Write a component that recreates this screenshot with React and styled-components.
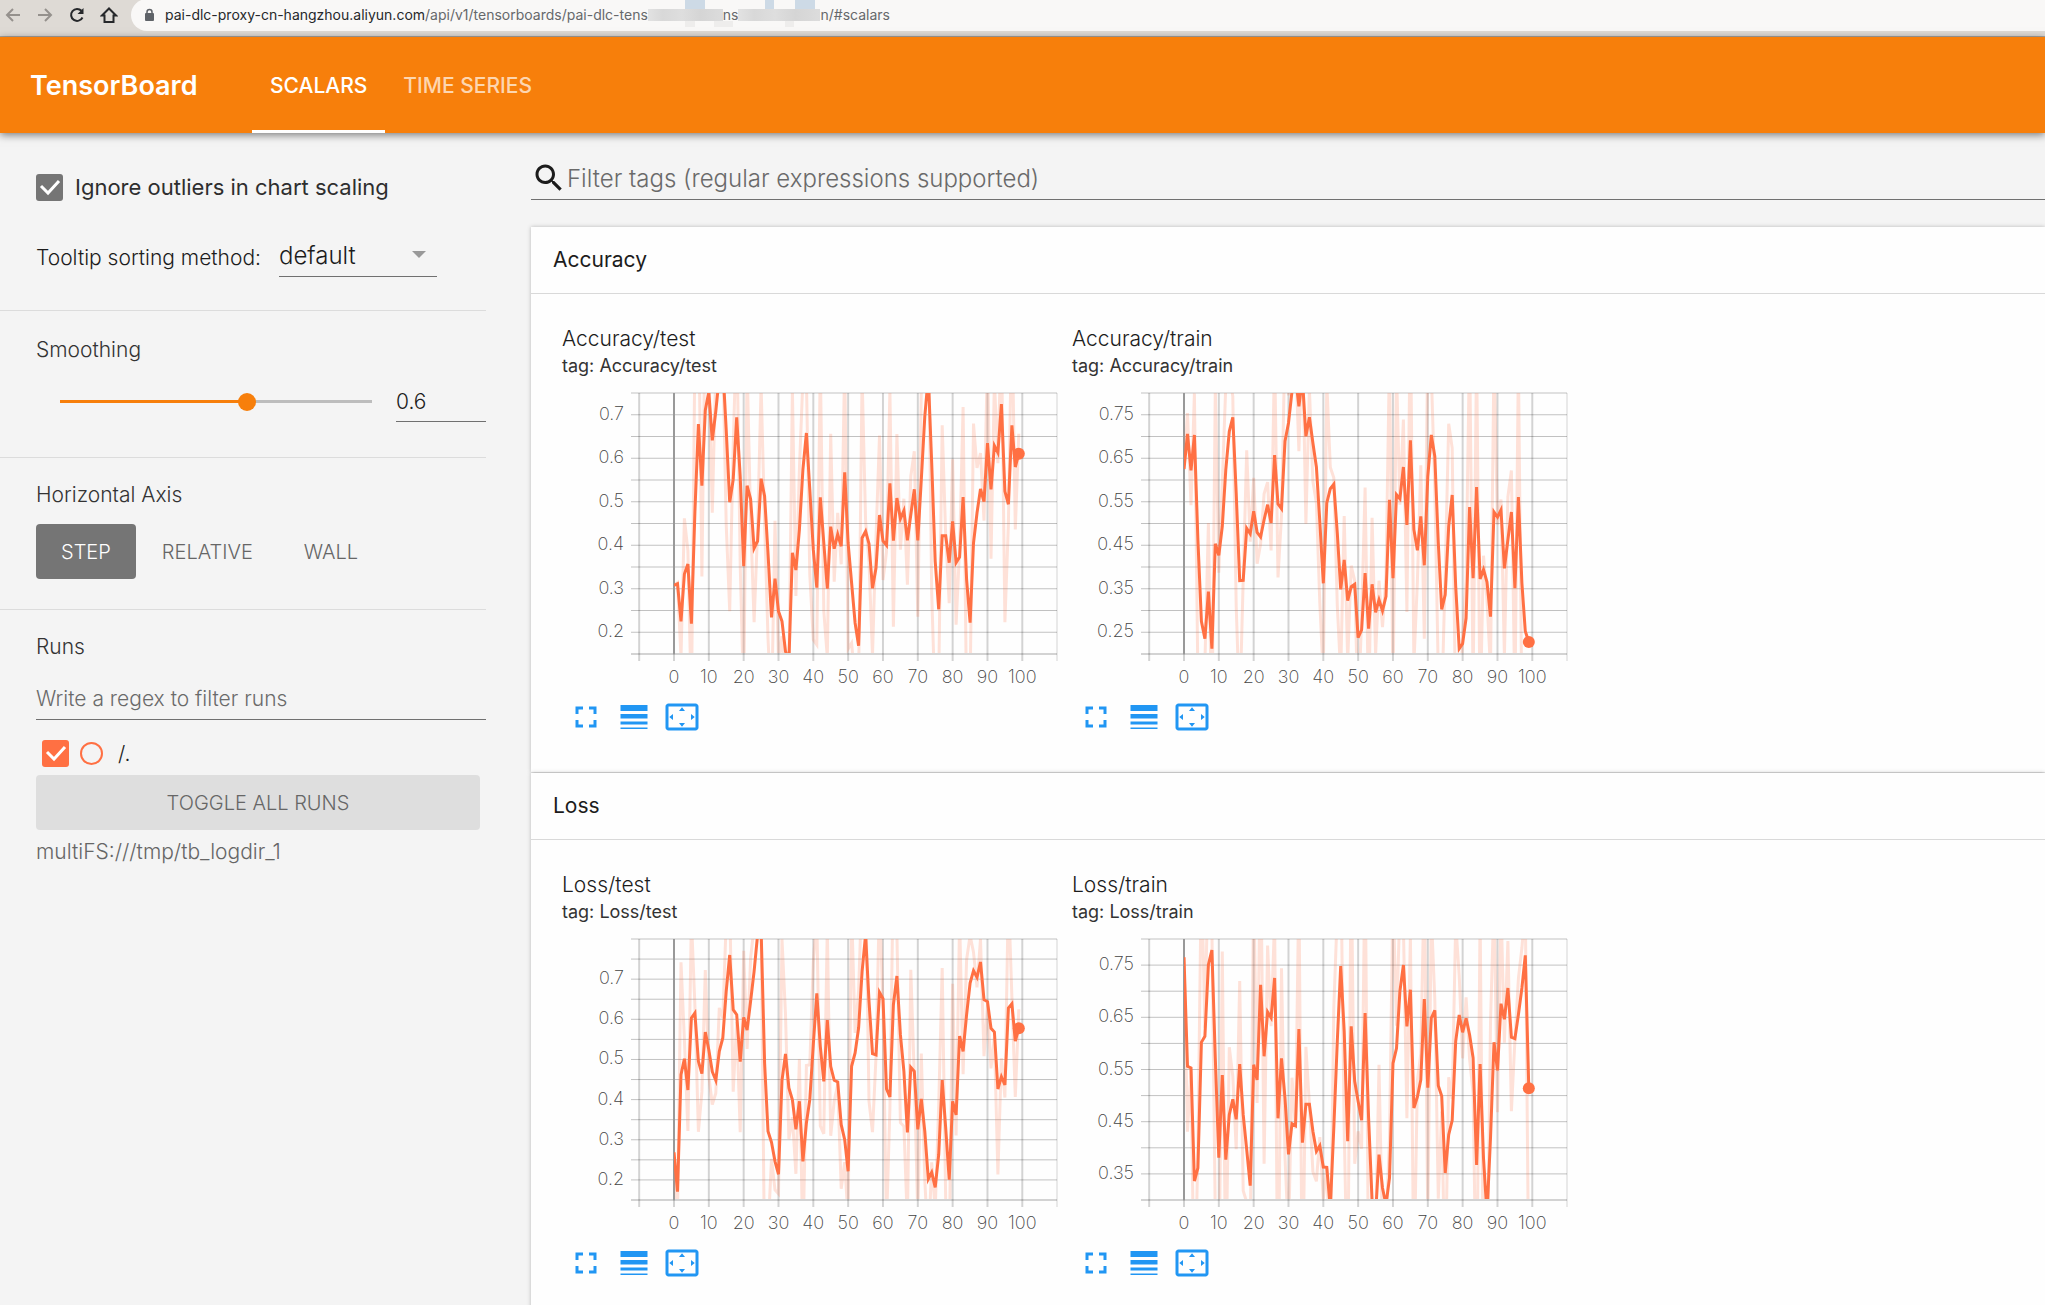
import React from "react";
import styled, { createGlobalStyle, css } from "styled-components";

const sans = `Inter, "Noto Sans", "Liberation Sans", sans-serif`;
const orange = "#f77f0b";
const runColor = "#ff7043";

const GlobalStyle = createGlobalStyle`
  * { box-sizing: border-box; }
  html, body, #root { height: 100%; }
  body { margin: 0; background: #f4f4f4; font-family: ${sans}; font-weight: 300; color: #1c1c1c; overflow: hidden; }
  button, input, select { font-family: inherit; font-weight: inherit; margin: 0; padding: 0; border: 0; border-radius: 0; background: none; outline: none; }
  svg { display: block; }
`;

const Page = styled.div`
  display: flex;
  flex-direction: column;
  height: 100%;
`;

/* ---------- browser bar ---------- */

const BrowserBar = styled.div`
  display: flex;
  align-items: center;
  flex: none;
  height: 37px;
  padding-bottom: 6px;
  background: #dedad5;
  border-bottom: 1px solid #a9a5a0;
`;

const BrowserButtons = styled.div`
  display: flex;
  gap: 12px;
  padding-left: 3px;
  width: 131px;
`;

const BrowserButton = styled.button`
  width: 20px;
  height: 30px;
  display: grid;
  place-items: center;
  color: ${(p) => (p.$dim ? "#95918d" : "#26282b")};
`;

const AddressBar = styled.div`
  display: flex;
  align-items: center;
  flex: 1;
  height: 32px;
  padding-left: 12px;
  border-radius: 16px 0 0 16px;
  background: #f9f8f7;
  white-space: nowrap;
`;

const Url = styled.div`
  display: flex;
  align-items: center;
  margin-left: 10px;
  font-size: 14px;
  font-weight: 400;
  line-height: 20px;
  color: #66686b;
`;

const Host = styled.span`
  color: #26282b;
`;

const Mask = styled.span`
  position: relative;
  width: ${(p) => p.$width}px;
  height: 12px;
  background: linear-gradient(90deg, #e2e2e2, #d8d8d8 20%, #dedede 45%, #d5d5d5 70%, #dcdcdc);
`;

const MaskBlock = styled.i`
  position: absolute;
  left: ${(p) => p.$left}px;
  top: ${(p) => (p.$low ? 12 : -10)}px;
  width: ${(p) => p.$width}px;
  height: ${(p) => (p.$low ? 6 : 10)}px;
  background: ${(p) => (p.$low ? "#eeedec" : "#cddae6")};
`;

/* ---------- app header ---------- */

const Header = styled.header`
  position: relative;
  display: flex;
  align-items: stretch;
  flex: none;
  height: 96px;
  padding-left: 30px;
  background: ${orange};
  box-shadow: 0 2px 8px rgba(0, 0, 0, 0.5);
  color: #fff;
`;

const Brand = styled.h1`
  margin: 0;
  width: 222px;
  font-size: 27px;
  font-weight: 600;
  line-height: 98px;
`;

const Tabs = styled.nav`
  display: flex;
`;

const Tab = styled.button`
  padding: 4px 18px 0;
  font-size: 21px;
  font-weight: 500;
  color: ${(p) => (p.$active ? "#fff" : "#fdd6b0")};
  border-bottom: 3px solid ${(p) => (p.$active ? "#fff" : "transparent")};
`;

/* ---------- layout ---------- */

const Body = styled.div`
  display: flex;
  flex: 1;
  min-height: 0;
`;

const Sidebar = styled.aside`
  flex: none;
  width: 486px;
`;

const Main = styled.main`
  flex: 1;
  min-width: 0;
  margin-left: 37px;
  padding-left: 8px;
  overflow: hidden;
`;

/* ---------- sidebar ---------- */

const Group = styled.section`
  padding: ${(p) => p.$pad};
  border-bottom: ${(p) => (p.$last ? 0 : "1px solid #dcdcdc")};
`;

const GroupTitle = styled.h3`
  margin: 0;
  font-size: 21px;
  font-weight: 300;
  line-height: 28px;
  color: #333;
`;

const CheckLabel = styled.label`
  display: flex;
  align-items: center;
  gap: 12px;
  height: 28px;
  font-size: 22px;
  font-weight: 400;
  line-height: 28px;
  color: #2e2e2e;
`;

const CheckWrap = styled.span`
  display: grid;
  width: 27px;
  height: 27px;
  > * { grid-area: 1 / 1; }
  svg { pointer-events: none; }
`;

const CheckInput = styled.input`
  appearance: none;
  width: 27px;
  height: 27px;
  border-radius: 3px;
  background: ${(p) => p.$color};
`;

const SortRow = styled.div`
  display: flex;
  align-items: center;
  margin-top: 32px;
  height: 44px;
  font-size: 21px;
`;

const SortLabel = styled.label`
  width: 243px;
  padding-top: 4px;
  white-space: nowrap;
`;

const SelectWrap = styled.div`
  display: grid;
  align-items: center;
  width: 158px;
  border-bottom: 1px solid #707070;
  > * { grid-area: 1 / 1; }
  svg { justify-self: end; margin-right: 11px; pointer-events: none; }
`;

const Select = styled.select`
  appearance: none;
  width: 100%;
  height: 43px;
  padding-top: 2px;
  font-size: 24px;
  color: #1c1c1c;
`;

const SliderRow = styled.div`
  display: flex;
  align-items: center;
  justify-content: space-between;
  margin-top: 17px;
  padding-left: 15px;
`;

const Slider = styled.input`
  appearance: none;
  width: 330px;
  height: 18px;
  &::-webkit-slider-runnable-track {
    height: 18px;
    background: linear-gradient(90deg, transparent 9px, ${orange} 9px, ${orange} 60%, #bdbdbd 60%, #bdbdbd calc(100% - 9px), transparent calc(100% - 9px)) center / 100% 3px no-repeat;
  }
  &::-webkit-slider-thumb {
    appearance: none;
    width: 18px;
    height: 18px;
    border-radius: 50%;
    background: ${orange};
  }
`;

const lineInput = css`
  border-bottom: 1px solid #707070;
  color: #1c1c1c;
  &::placeholder { color: #6a6a6a; opacity: 1; }
`;

const NumberInput = styled.input`
  ${lineInput}
  width: 90px;
  height: 41px;
  font-size: 21px;
`;

const AxisButtons = styled.div`
  display: flex;
  gap: 1px;
  margin-top: 15px;
`;

const AxisButton = styled.button`
  height: 55px;
  padding: 0 25px;
  border-radius: 4px;
  font-size: 20px;
  color: ${(p) => (p.$active ? "#fff" : "#666")};
  background: ${(p) => (p.$active ? "#757575" : "transparent")};
`;

const RunFilter = styled.input`
  ${lineInput}
  display: block;
  width: 100%;
  height: 42px;
  margin-top: 17px;
  font-size: 21px;
`;

const RunRow = styled.label`
  display: flex;
  align-items: center;
  height: 27px;
  margin: 20px 0 8px;
  padding-left: 6px;
  font-size: 21px;
`;

const RunDot = styled.span`
  width: 23px;
  height: 23px;
  margin: 0 15px 0 11px;
  border: 2px solid ${runColor};
  border-radius: 50%;
`;

const ToggleAll = styled.button`
  display: block;
  width: 444px;
  height: 55px;
  border-radius: 4px;
  background: #dedede;
  font-size: 20px;
  color: #666;
`;

const LogDir = styled.div`
  margin-top: 8px;
  font-size: 21px;
  line-height: 28px;
  color: #666;
`;

/* ---------- main ---------- */

const Search = styled.label`
  display: flex;
  align-items: center;
  height: 43px;
  margin: 24px 0 27px;
  border-bottom: 1px solid #707070;
  svg { flex: none; }
`;

const SearchInput = styled.input`
  flex: 1;
  height: 42px;
  font-size: 24px;
  &::placeholder { color: #6a6a6a; opacity: 1; }
`;

const Card = styled.section`
  margin-bottom: 1px;
  box-shadow: 0 0 4px rgba(0, 0, 0, 0.25);
  background: #fefefe;
`;

const CardTitle = styled.h2`
  margin: 0;
  height: 67px;
  padding-left: 22px;
  border-bottom: 1px solid #d9d9d9;
  font-size: 21px;
  font-weight: 400;
  line-height: 66px;
`;

const Charts = styled.div`
  display: flex;
  flex-wrap: wrap;
  padding: 31px 0 37px 31px;
`;

const ChartCell = styled.article`
  width: 510px;
`;

const ChartTitle = styled.h4`
  margin: 0;
  font-size: 21px;
  font-weight: 300;
  line-height: 28px;
`;

const ChartTag = styled.div`
  font-size: 18px;
  font-weight: 400;
  line-height: 26px;
  color: #333;
`;

const Plot = styled.svg`
  margin-top: 11px;
  overflow: visible;
`;

const AxisText = styled.text`
  font-family: ${sans};
  font-size: 18px;
  font-weight: 200;
  fill: #444;
`;

const Tools = styled.div`
  display: flex;
  gap: 12px;
  margin-top: 9px;
  padding-left: 6px;
`;

const ToolButton = styled.button`
  width: 36px;
  height: 36px;
  svg { fill: #2196f3; }
`;

/* ---------- data ---------- */

const accuracyTest = [617, 612, 725, 583, 553, 732, 397, 133, 318, 92, 37, 182, 95, -10, -40, 150, 368, 300, 113, 290, 560, 318, 358, 506, 484, 297, 350, 520, 713, 597, 695, 725, 815, 845, 519, 571, 450, 270, 160, 330, 510, 624, 353, 490, 627, 441, 507, 464, 500, 278, 490, 610, 730, 798, 475, 455, 492, 626, 565, 406, 484, 497, 311, 483, 355, 417, 393, 482, 405, 329, 482, 300, 110, -10, 250, 545, 689, 468, 468, 549, 425, 549, 532, 352, 600, 729, 490, 400, 328, 366, 190, 329, 198, 219, 73, 335, 374, 137, 262, 222];
const accuracyTrain = [268, 163, 272, 166, 480, 725, 777, 636, 807, 492, 527, 440, 270, 155, 113, 340, 603, 602, 446, 462, 395, 458, 472, 420, 375, 430, 226, 373, 387, 185, 130, 35, -10, 80, -5, 170, 113, 190, 262, 425, 611, 370, 327, 314, 460, 629, 541, 663, 621, 614, 774, 751, 580, 747, 614, 698, 660, 693, 650, 360, 596, 345, 357, 262, 436, 182, 450, 512, 410, 557, 290, 166, 230, 490, 689, 645, 440, 346, 620, 807, 792, 715, 382, 596, 322, 598, 570, 607, 711, 397, 412, 391, 566, 480, 397, 626, 352, 610, 755, 787];
const lossTest = [683, 801, 450, 402, 496, 280, 265, 410, 447, 322, 375, 441, 467, 380, 340, 200, 91, 255, 270, 411, 278, 316, 230, 140, 30, 15, 415, 620, 653, 710, 749, 467, 388, 490, 525, 614, 530, 710, 595, 525, 360, 206, 365, 470, 286, 425, 467, 472, 600, 645, 740, 425, 385, 310, 140, 30, 230, 387, 391, 203, 222, 493, 517, 240, 154, 330, 440, 623, 428, 440, 614, 523, 620, 763, 743, 788, 690, 466, 610, 765, 530, 571, 334, 380, 270, 175, 138, 158, 112, 225, 231, 311, 322, 493, 456, 481, 250, 237, 349, 311];
const lossTrain = [98, 425, 430, 769, 730, 353, 335, 120, 76, 400, 699, 451, 705, 570, 524, 584, 418, 570, 675, 783, 420, 466, 180, 395, 262, 279, 160, 581, 401, 520, 689, 597, 603, 313, 654, 539, 539, 620, 680, 663, 727, 728, 850, 610, 350, 124, 320, 650, 305, 470, 530, 587, 265, 580, 830, 870, 690, 790, 840, 760, 416, 371, 200, 121, 305, 195, 550, 517, 465, 223, 489, 280, 257, 483, 514, 745, 630, 587, 350, 271, 323, 281, 330, 400, 721, 418, 700, 870, 640, 353, 437, 237, 284, 190, 338, 342, 270, 190, 92, 491];

const sections = [
  {
    name: "Accuracy",
    charts: [
      { name: "Accuracy/test", smooth: accuracyTest, origin: 40, rows: 12, first: 1, labels: ["0.7", "0.6", "0.5", "0.4", "0.3", "0.2"] },
      { name: "Accuracy/train", smooth: accuracyTrain, origin: 40, rows: 12, first: 1, labels: ["0.75", "0.65", "0.55", "0.45", "0.35", "0.25"] },
    ],
  },
  {
    name: "Loss",
    charts: [
      { name: "Loss/test", smooth: lossTest, origin: 43, rows: 13, first: 2, labels: ["0.7", "0.6", "0.5", "0.4", "0.3", "0.2"] },
      { name: "Loss/train", smooth: lossTrain, origin: 43, rows: 10, first: 1, labels: ["0.75", "0.65", "0.55", "0.45", "0.35"] },
    ],
  },
];

const SMOOTHING = 0.6;

/* Undo the debiased exponential smoothing to recover the raw series. */
function rawSeries(smooth) {
  const acc = smooth.map((s, i) => s * (1 - SMOOTHING ** (i + 1)));
  return acc.map((a, i) => (a - (i ? SMOOTHING * acc[i - 1] : 0)) / (1 - SMOOTHING));
}

const TOP = 3;
const BOTTOM = 264;
const ZERO_X = 112;
const STEP = 3.483;

function Chart({ name, smooth, origin, rows, first, labels }) {
  const toPath = (series) =>
    "M" + series.map((v, i) => `${(ZERO_X + i * STEP).toFixed(1)} ${(TOP + (v - origin) / 3).toFixed(1)}`).join("L");
  const rowY = (i) => TOP + ((BOTTOM - TOP) * i) / rows;
  const clip = "clip-" + name.replace("/", "-");
  const cols = Array.from({ length: 12 }, (_, i) => ZERO_X + (i - 1) * 10 * STEP);
  return (
    <Plot width="500" height="300" role="img" aria-label={name}>
      <clipPath id={clip}>
        <rect x="112" y={TOP} width="390" height={BOTTOM - TOP - 1} />
      </clipPath>
      <g stroke="#000" strokeOpacity="0.24">
        {Array.from({ length: rows }, (_, i) => (
          <line key={i} x1="69" x2="495" y1={rowY(i)} y2={rowY(i)} />
        ))}
      </g>
      <g stroke="#000" strokeOpacity="0.17" strokeWidth="2">
        {cols.map((x, i) => (
          <line key={i} x1={x} x2={x} y1={TOP} y2="271" />
        ))}
        <line x1="495" x2="495" y1={TOP} y2="271" strokeWidth="1" />
        <line x1="69" x2="495" y1={BOTTOM} y2={BOTTOM} />
      </g>
      <line x1={ZERO_X} x2={ZERO_X} y1={TOP} y2={BOTTOM} stroke="#999" strokeWidth="2" />
      <g clipPath={`url(#${clip})`} fill="none" stroke={runColor}>
        <path d={toPath(rawSeries(smooth))} strokeOpacity="0.2" strokeWidth="3" />
        <path d={toPath(smooth)} strokeWidth="3" />
      </g>
      <circle cx={ZERO_X + 99 * STEP} cy={TOP + (smooth[99] - origin) / 3} r="6" fill={runColor} />
      {labels.map((t, i) => (
        <AxisText key={t} x="62" y={rowY(first + i * 2) + 5} textAnchor="end">{t}</AxisText>
      ))}
      {cols.slice(1).map((x, i) => (
        <AxisText key={i} x={x} y="293" textAnchor="middle">{i * 10}</AxisText>
      ))}
    </Plot>
  );
}

const toolIcons = [
  ["Toggle full size", "M7 14H5v5h5v-2H7v-3zm-2-4h2V7h3V5H5v5zm12 7h-3v2h5v-5h-2v3zM14 5v2h3v3h2V5h-5z"],
  ["Toggle y-axis log scale", "M3 17h18v-2H3v2zm0 3h18v-1H3v1zm0-7h18v-3H3v3zm0-9v4h18V4H3z"],
  ["Fit domain to data", "M12.01 5.5L10 8h4l-1.99-2.5zM18 10v4l2.5-1.99L18 10zM6 10l-2.5 2.01L6 14v-4zm8 6h-4l2.01 2.5L14 16zm7-13H3c-1.1 0-2 .9-2 2v14c0 1.1.9 2 2 2h18c1.1 0 2-.9 2-2V5c0-1.1-.9-2-2-2zm0 16.01H3V4.99h18v14.02z"],
];

function Checkbox({ color }) {
  return (
    <CheckWrap>
      <CheckInput type="checkbox" defaultChecked $color={color} />
      <svg width="27" height="27" fill="none" stroke="#fff" strokeWidth="3">
        <path d="M5 12L12 19L23 7" />
      </svg>
    </CheckWrap>
  );
}

export default function App() {
  return (
    <Page>
      <GlobalStyle />
      <BrowserBar>
        <BrowserButtons>
          <BrowserButton $dim aria-label="Back">
            <svg width="16" height="16" fill="none" stroke="currentColor" strokeWidth="2"><path d="M15 8H2M8 2L2 8l6 6" /></svg>
          </BrowserButton>
          <BrowserButton $dim aria-label="Forward">
            <svg width="16" height="16" fill="none" stroke="currentColor" strokeWidth="2"><path d="M1 8h13M8 2l6 6-6 6" /></svg>
          </BrowserButton>
          <BrowserButton aria-label="Reload">
            <svg width="16" height="16" fill="none" stroke="currentColor" strokeWidth="2"><path d="M13.500 10.500A6 6 0 1 1 12.500 3.800" /><path d="M14.500 1v6h-6z" fill="currentColor" stroke="none" /></svg>
          </BrowserButton>
          <BrowserButton aria-label="Home">
            <svg width="18" height="18" fill="none" stroke="currentColor" strokeWidth="2"><path d="M2 9.500L9 2.500l7 7h-2.500V16h-9V9.500z" /></svg>
          </BrowserButton>
        </BrowserButtons>
        <AddressBar>
          <svg width="12" height="14" fill="#5f6368"><rect x="2" y="5" width="9" height="8" rx="1" /><path d="M4 6V4a2.500 2.500 0 0 1 5 0v2" fill="none" stroke="#5f6368" strokeWidth="1.500" /></svg>
          <Url>
            <Host>pai-dlc-proxy-cn-hangzhou.aliyun.com</Host>
            <span>/api/v1/tensorboards/pai-dlc-tens</span>
            <Mask $width={75}>
              <MaskBlock $left={37} $width={20} />
              <MaskBlock $low $left={37} $width={10} />
              <MaskBlock $low $left={66} $width={19} />
            </Mask>
            <span>ns</span>
            <Mask $width={82}>
              <MaskBlock $left={27} $width={9} />
              <MaskBlock $left={57} $width={20} />
              <MaskBlock $low $left={47} $width={9} />
            </Mask>
            <span>n/#scalars</span>
          </Url>
        </AddressBar>
      </BrowserBar>
      <Header>
        <Brand>TensorBoard</Brand>
        <Tabs>
          <Tab $active>SCALARS</Tab>
          <Tab>TIME SERIES</Tab>
        </Tabs>
      </Header>
      <Body>
        <Sidebar>
          <Group $pad="40px 0 33px 36px">
            <CheckLabel>
              <Checkbox color="#757575" />
              Ignore outliers in chart scaling
            </CheckLabel>
            <SortRow>
              <SortLabel htmlFor="sort">Tooltip sorting method:</SortLabel>
              <SelectWrap>
                <Select id="sort"><option>default</option></Select>
                <svg width="14" height="7" fill="#999"><path d="M0 0h14L7 7z" /></svg>
              </SelectWrap>
            </SortRow>
          </Group>
          <Group $pad="25px 0 35px 36px">
            <GroupTitle>Smoothing</GroupTitle>
            <SliderRow>
              <Slider type="range" min="0" max="1" step="0.1" defaultValue="0.6" aria-label="Smoothing" />
              <NumberInput defaultValue="0.6" aria-label="Smoothing value" />
            </SliderRow>
          </Group>
          <Group $pad="23px 0 30px 36px">
            <GroupTitle>Horizontal Axis</GroupTitle>
            <AxisButtons>
              <AxisButton $active>STEP</AxisButton>
              <AxisButton>RELATIVE</AxisButton>
              <AxisButton>WALL</AxisButton>
            </AxisButtons>
          </Group>
          <Group $last $pad="23px 0 0 36px">
            <GroupTitle>Runs</GroupTitle>
            <RunFilter placeholder="Write a regex to filter runs" aria-label="Filter runs" />
            <RunRow>
              <Checkbox color={runColor} />
              <RunDot />
              /.
            </RunRow>
            <ToggleAll>TOGGLE ALL RUNS</ToggleAll>
            <LogDir>multiFS:///tmp/tb_logdir_1</LogDir>
          </Group>
        </Sidebar>
        <Main>
          <Search>
            <svg width="36" height="36" viewBox="0 0 24 24" fill="#1c1c1c"><path d="M15.500 14h-.79l-.28-.27C15.410 12.590 16 11.110 16 9.500 16 5.910 13.090 3 9.500 3S3 5.910 3 9.500 5.910 16 9.500 16c1.610 0 3.090-.59 4.230-1.570l.27.28v.79l5 4.990L20.490 19l-4.990-5zm-6 0C7.010 14 5 11.990 5 9.500S7.010 5 9.500 5 14 7.010 14 9.500 11.990 14 9.500 14z" /></svg>
            <SearchInput placeholder="Filter tags (regular expressions supported)" aria-label="Filter tags" />
          </Search>
          {sections.map((s) => (
            <Card key={s.name}>
              <CardTitle>{s.name}</CardTitle>
              <Charts>
                {s.charts.map((c) => (
                  <ChartCell key={c.name}>
                    <ChartTitle>{c.name}</ChartTitle>
                    <ChartTag>tag: {c.name}</ChartTag>
                    <Chart {...c} />
                    <Tools>
                      {toolIcons.map(([label, d]) => (
                        <ToolButton key={label} aria-label={label}>
                          <svg width="36" height="36" viewBox="0 0 24 24"><path d={d} /></svg>
                        </ToolButton>
                      ))}
                    </Tools>
                  </ChartCell>
                ))}
              </Charts>
            </Card>
          ))}
        </Main>
      </Body>
    </Page>
  );
}
